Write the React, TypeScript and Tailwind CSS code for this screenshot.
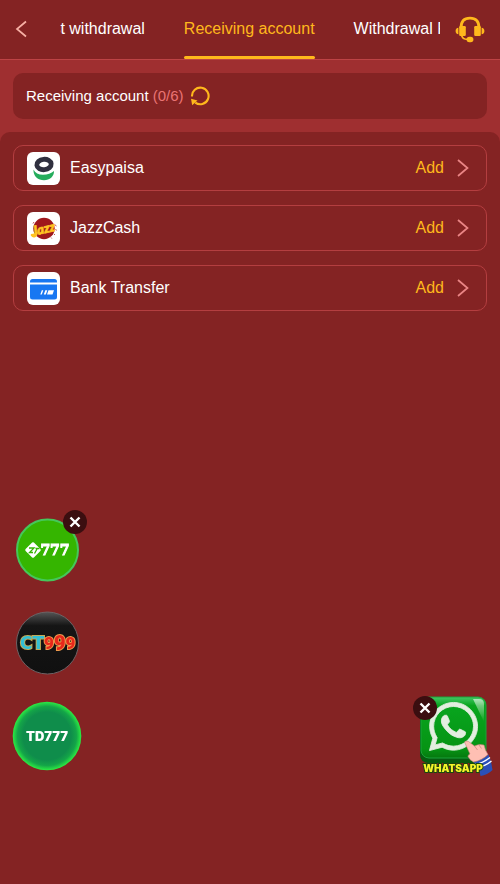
import type { ReactNode } from "react";
import { FaWhatsapp } from "react-icons/fa";

function BackIcon() {
  return (
    <svg viewBox="0 0 12 18" className="h-[18px] w-3" fill="none" stroke="#f7b0a5" strokeWidth="1.7">
      <path d="M11 1.5 2 9l9 7.5" />
    </svg>
  );
}

function HeadsetIcon() {
  return (
    <svg viewBox="0 0 30 27" className="h-[27px] w-[30px]" fill="#ffb81c">
      <path d="M6 12C6 5 9.200 2.200 15 2.200s9 2.800 9 9.800" fill="none" stroke="#ffb81c" strokeWidth="2.800" />
      <rect x="4.200" y="10" width="6.600" height="10" rx="1.200" />
      <rect x="19.200" y="10" width="6.600" height="10" rx="1.200" />
      <path d="M3.400 11.800v6.400C1.500 18 .6 17 .6 15s.9-3 2.800-3.200zM26.600 11.800v6.400c1.900-.2 2.800-1.200 2.800-3.200s-.9-3-2.800-3.200z" />
      <path d="M6.600 19c.4 3.300 2.200 4.400 6 4.400" fill="none" stroke="#ffb81c" strokeWidth="1.800" />
      <rect x="11.600" y="20.800" width="6.800" height="5.400" rx="2.700" />
    </svg>
  );
}

function RefreshIcon() {
  return (
    <svg viewBox="0 0 20 20" className="size-5" fill="none" stroke="#ffb81c" strokeWidth="2.100">
      <path d="M2 10.500A8.300 8.300 0 1 1 5.300 16.600" />
      <path d="M1 12.800l6.500 1.600-5.300 4.800z" fill="#ffb81c" stroke="none" />
    </svg>
  );
}

function ChevronIcon() {
  return (
    <svg viewBox="0 0 12 18" className="h-[18px] w-3" fill="none" stroke="#ea8585" strokeWidth="1.700">
      <path d="M1 1l9.500 8L1 17" />
    </svg>
  );
}

function EasypaisaLogo() {
  return (
    <svg viewBox="0 0 33 33" className="size-[33px]">
      <path d="M6.500 17.500c1.500 3.500 5 5.200 9.500 5.200s8.500-1.400 11-3.700c.2 5.500-4.300 9.200-10 9.200S6 24.500 6.500 17.500z" fill="#25ad5c" />
      <ellipse cx="17" cy="12.500" rx="7.200" ry="5.200" transform="rotate(-6 17 12.500)" fill="#fff" stroke="#fff" strokeWidth="7" />
      <ellipse cx="17" cy="12.500" rx="7.200" ry="5.200" transform="rotate(-6 17 12.500)" fill="#fff" stroke="#30303f" strokeWidth="4.800" />
    </svg>
  );
}

function JazzLogo() {
  return (
    <svg viewBox="0 0 33 33" className="size-[33px]">
      <circle cx="17" cy="16.500" r="10.700" fill="#9f171c" />
      <path d="M27.500 12.500l2 1.500M28.500 17l1 1.500M27 22l1 1M7 10l-1 1.500M24 25.500l.8 1" stroke="#b9555a" strokeWidth="1" />
      <g transform="rotate(-12 16 17)" fontFamily="Lato, sans-serif" fontWeight="900" fontStyle="italic">
        <text x="16.500" y="21.500" textAnchor="middle" fontSize="13" fill="#ffc323" stroke="#ffc323" strokeWidth=".7">Jazz</text>
      </g>
      <path d="M5 23c1.500 2.200 4.200 1 4.500-2" fill="none" stroke="#ffc323" strokeWidth="2.600" strokeLinecap="round" />
    </svg>
  );
}

function BankLogo() {
  return (
    <svg viewBox="0 0 33 33" className="size-[33px]" fill="#1877f2">
      <path d="M3 10.500V9.500Q3 7 5.500 7h22Q30 7 30 9.500v1z" />
      <path d="M3 12.500h27V25q0 2.500-2.500 2.500h-22Q3 27.500 3 25z" />
      <path d="M14.800 18.200h1.500l-1.500 4.300h-1.500zM18.300 18.200h2l-1.500 4.300h-2zM21.500 18.200h5.500l-1.500 4.300H20z" fill="#fff" />
    </svg>
  );
}

function CloseButton({ label, className }: { label: string; className: string }) {
  return (
    <button aria-label={label} className={`absolute flex size-6 items-center justify-center rounded-full bg-[#3b0e10] ${className}`}>
      <svg viewBox="0 0 12 12" className="size-3" fill="none" stroke="#fff" strokeWidth="2.400">
        <path d="M1.500 1.500l9 9M10.500 1.500l-9 9" />
      </svg>
    </button>
  );
}

function ZtBadge() {
  return (
    <svg viewBox="0 0 64 64" className="size-16">
      <circle cx="32.500" cy="32" r="30.500" fill="#35b500" stroke="#45c75a" strokeWidth="2" />
      <path d="M11.500 32l6.500-6.500 6.500 6.500-6.500 6.500z" fill="#fff" stroke="#fff" strokeWidth="2.500" strokeLinejoin="round" />
      <path d="M14 30h5l-4.500 4.500H18M20.500 30.500h4M22 31l-2.500 4.500" fill="none" stroke="#35b500" strokeWidth="1.300" />
      <text x="40" y="37" textAnchor="middle" fontFamily="'DejaVu Serif', serif" fontWeight="700" fontSize="14" fill="#fff" stroke="#fff" strokeWidth="1">777</text>
    </svg>
  );
}

function CtBadge() {
  return (
    <svg viewBox="0 0 64 64" className="size-16">
      <defs>
        <linearGradient id="rim" x2="0" y2="1">
          <stop stopColor="#555" />
          <stop offset=".22" stopColor="#151515" />
          <stop offset="1" stopColor="#101010" />
        </linearGradient>
      </defs>
      <circle cx="32.500" cy="32" r="31" fill="url(#rim)" stroke="#6d6264" strokeWidth="1" />
      <text x="5" y="38" fontSize="17" fontFamily="'DejaVu Sans', sans-serif" fontWeight="700" fill="#31bfd6" stroke="#c2ab58" strokeWidth="2" paintOrder="stroke">
        CT<tspan fontFamily="Roboto, sans-serif" fontWeight="900" fontSize="17" fill="#e8271b" stroke="#ef9a4d">9<tspan fontSize="20" dy="1">9</tspan><tspan dy="-1">9</tspan></tspan>
      </text>
    </svg>
  );
}

function TdBadge() {
  return (
    <svg viewBox="0 0 70 70" className="size-[70px]">
      <defs>
        <radialGradient id="glow">
          <stop offset=".7" stopColor="#0f8d4b" />
          <stop offset=".86" stopColor="#14a548" />
          <stop offset="1" stopColor="#2cec43" />
        </radialGradient>
      </defs>
      <circle cx="35" cy="35" r="34.300" fill="url(#glow)" />
      <text x="35" y="40" textAnchor="middle" fontFamily="Inter, sans-serif" fontWeight="900" fontSize="13" fill="#fff">TD777</text>
    </svg>
  );
}

function WhatsappBadge() {
  return (
    <svg viewBox="0 0 76 82" className="h-[82px] w-[76px]">
      <defs>
        <linearGradient id="tile" x2="0" y2="1">
          <stop stopColor="#43c765" />
          <stop offset=".14" stopColor="#08a51e" />
          <stop offset=".85" stopColor="#069414" />
          <stop offset="1" stopColor="#05780f" />
        </linearGradient>
        <linearGradient id="shine" x2="0" y2="1">
          <stop stopColor="#fff" stopOpacity=".6" />
          <stop offset="1" stopColor="#fff" stopOpacity="0" />
        </linearGradient>
      </defs>
      <rect x="2" y="4" width="66" height="63" rx="8" fill="#075d10" />
      <rect x="3" y="1" width="65" height="61" rx="8" fill="url(#tile)" stroke="#1ba33a" strokeWidth="1" />
      <path d="M55 3h6q5 0 5 5v18z" fill="url(#shine)" />
      <FaWhatsapp x={8} y={3} size={55} color="#e3eee0" stroke="#e3eee0" strokeWidth={8} />
      <path d="M55.500 66q8-1.500 15-7.500 3.500 8 4 15.500-5 5-12 6-1-7-7-14z" fill="#2a50b8" />
      <path d="M57 68.500q8-1.500 15-7M59.500 71.500q8-1.500 14-6.500" fill="none" stroke="#fff" strokeWidth="1.400" />
      <path d="M46.500 46q1-1.500 4-.5l6 4.500q4-2.500 9.500-1 1 5.500 4 9.500-6 6-14.500 7.500-4-2-5.500-5.500 0-2 2-2.500z" fill="#ffbfb3" stroke="#c98078" strokeWidth=".6" />
      <path d="M56.500 50l3 4M61 49l2.500 3.500" fill="none" stroke="#cf8880" strokeWidth=".8" />
      <text x="35" y="76" textAnchor="middle" fontFamily="Inter, sans-serif" fontWeight="900" fontSize="10" fill="#f6f32a" stroke="#174a0c" strokeWidth="1.800" paintOrder="stroke">WHATSAPP</text>
    </svg>
  );
}

const tabs = ["Request withdrawal", "Receiving account", "Withdrawal Records"];

const accounts: { name: string; logo: ReactNode }[] = [
  { name: "Easypaisa", logo: <EasypaisaLogo /> },
  { name: "JazzCash", logo: <JazzLogo /> },
  { name: "Bank Transfer", logo: <BankLogo /> },
];

export default function App() {
  return (
    <div className="flex min-h-screen flex-col bg-[#9f2f30] font-['Liberation_Sans',Arial,sans-serif] text-white">
      <header className="flex h-15 items-stretch border-b border-[#bd4345] bg-[#842323]">
        <button aria-label="Back" className="flex w-15 shrink-0 items-center pb-0.5 pl-[15px]">
          <BackIcon />
        </button>
        <nav className="flex min-w-0 flex-1 justify-center gap-[39px] overflow-hidden pl-0.5">
          {tabs.map((tab, i) => (
            <button
              key={tab}
              className={
                i === 1
                  ? "relative shrink-0 whitespace-nowrap pb-0.5 text-base text-[#ffb81c]"
                  : "shrink-0 whitespace-nowrap pb-0.5 text-base"
              }
            >
              {tab}
              {i === 1 && <span className="absolute inset-x-0 bottom-0 h-[3px] rounded-full bg-[#ffb81c]" />}
            </button>
          ))}
        </nav>
        <button aria-label="Customer service" className="flex w-15 shrink-0 items-center justify-center">
          <HeadsetIcon />
        </button>
      </header>

      <section className="p-[13px]">
        <div className="flex h-[46px] items-center rounded-[10px] bg-[#842323] px-[13px] text-[15px]">
          <h1>
            Receiving account <span className="text-[#ea7474]">(0/6)</span>
          </h1>
          <button aria-label="Refresh" className="ml-1.5">
            <RefreshIcon />
          </button>
        </div>
      </section>

      <main className="flex-1 rounded-t-[10px] bg-[#842323] p-[13px]">
        <ul className="flex flex-col gap-3.5">
          {accounts.map(({ name, logo }) => (
            <li key={name}>
              <button className="flex h-[46px] w-full items-center rounded-[10px] border border-[#b43e40] px-[13px] text-base">
                <span className="rounded-md bg-white">{logo}</span>
                <span className="ml-2.5">{name}</span>
                <span className="mr-[13px] ml-auto text-[#ffb81c]">Add</span>
                <span className="mr-1">
                  <ChevronIcon />
                </span>
              </button>
            </li>
          ))}
        </ul>
      </main>

      <aside className="fixed bottom-[113px] left-3 flex w-[70px] flex-col items-center gap-[26px]">
        <div className="relative mb-[3px]">
          <button aria-label="ZT777" className="block">
            <ZtBadge />
          </button>
          <CloseButton label="Close promotions" className="-top-2 -right-2" />
        </div>
        <button aria-label="CT999">
          <CtBadge />
        </button>
        <button aria-label="TD777">
          <TdBadge />
        </button>
      </aside>

      <aside className="fixed right-1.5 bottom-[106px]">
        <button aria-label="WhatsApp" className="block">
          <WhatsappBadge />
        </button>
        <CloseButton label="Close WhatsApp" className="top-0 -left-[5px]" />
      </aside>
    </div>
  );
}
